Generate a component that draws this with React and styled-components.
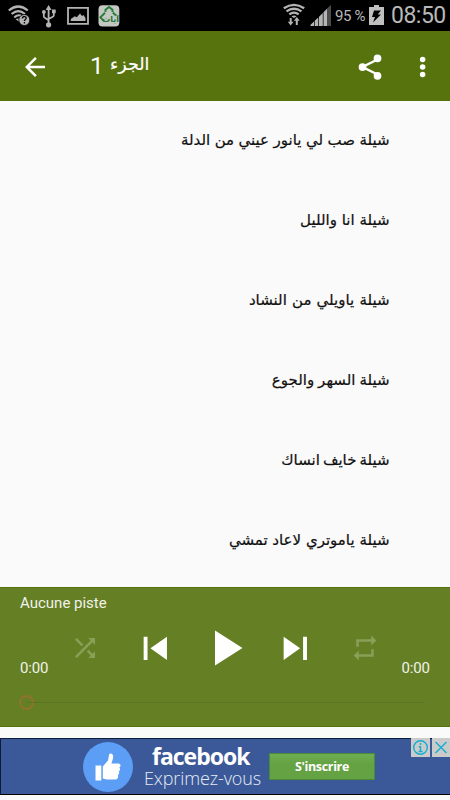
import React from 'react';
import styled, { createGlobalStyle } from 'styled-components';

const GlobalStyle = createGlobalStyle`
  * {
    box-sizing: border-box;
  }
  body {
    margin: 0;
    background: #fafafa;
    font-family: Roboto, 'Liberation Sans', sans-serif;
  }
`;

const Screen = styled.div`
  display: flex;
  flex-direction: column;
  width: 450px;
  height: 800px;
  overflow: hidden;
  background: #fafafa;
`;

const StatusBar = styled.div`
  display: flex;
  align-items: center;
  justify-content: space-between;
  height: 31px;
  padding: 0 4px 0 8px;
  background: #000;
`;

const StatusGroup = styled.div`
  display: flex;
  align-items: center;
  height: 31px;
`;

const StatusIcon = styled.svg`
  display: block;
  flex: none;
  margin-right: ${({ $gap }) => $gap || 0}px;
`;

const Battery = styled.span`
  width: 34px;
  font-size: 15px;
  line-height: 31px;
  letter-spacing: -0.4px;
  white-space: nowrap;
  color: #b8b8b8;
  padding-top: 2px;
`;

const Clock = styled.span`
  width: 55px;
  font-size: 23px;
  line-height: 31px;
  letter-spacing: -0.5px;
  white-space: nowrap;
  color: #b8b8b8;
`;

const Toolbar = styled.header`
  display: flex;
  flex: none;
  align-items: center;
  height: 70px;
  padding: 1px 12px 0 20px;
  background: #56730d;
  color: #fff;
`;

const Title = styled.h1`
  display: flex;
  flex: 1;
  height: 30px;
  align-items: center;
  margin: 0 0 0 40px;
  font-weight: 400;
`;

const TitleNumber = styled.span`
  width: 20px;
  font-size: 24.5px;
  line-height: 30px;
  margin-top: -2px;
`;

const TitleText = styled.span`
  font-family: 'DejaVu Sans', sans-serif;
  font-size: 17.5px;
  line-height: 30px;
  margin-top: -5px;
  white-space: nowrap;
  -webkit-text-stroke: 0.2px #fff;
`;

const Icon = styled.svg`
  display: block;
  flex: none;
  width: ${({ $size }) => $size || 30}px;
  height: ${({ $size }) => $size || 30}px;
  fill: ${({ $faded }) => ($faded ? '#8a9f58' : '#fff')};
  margin-right: ${({ $gap }) => $gap || 0}px;
`;

const TrackList = styled.ul`
  flex: none;
  height: 486px;
  margin: 0;
  padding: 0;
  overflow: hidden;
  list-style: none;
`;

const Track = styled.li`
  height: 80px;
  padding: 0 60.5px;
  font-family: 'DejaVu Sans', sans-serif;
  font-size: 15px;
  line-height: 79px;
  word-spacing: ${({ $spacing }) => $spacing}px;
  white-space: nowrap;
  color: #111;
  -webkit-text-stroke: 0.2px #111;
`;

const Player = styled.section`
  display: flex;
  flex-direction: column;
  flex: none;
  height: 140px;
  background: #657f25;
  border-top: 1px solid #567309;
  border-bottom: 1px solid #567309;
  color: #f0f2e9;
`;

const TrackName = styled.div`
  height: 30px;
  padding: 0 20px;
  font-size: 15px;
  line-height: 31px;
`;

const Controls = styled.div`
  display: flex;
  align-items: center;
  height: 60px;
`;

const Time = styled.span`
  width: 50px;
  font-size: 15px;
  line-height: 20px;
  margin-top: 40px;
  padding-left: ${({ $end }) => ($end ? 1.5 : 20)}px;
  letter-spacing: -0.2px;
`;

const ControlButton = styled.button`
  display: flex;
  align-items: center;
  justify-content: center;
  width: 70px;
  height: 60px;
  padding: 0;
  border: 0;
  background: none;
`;

const SeekBar = styled.div`
  display: flex;
  align-items: center;
  height: 15px;
  margin: 17px 26px 0 19px;
`;

const SeekThumb = styled.div`
  width: 15px;
  height: 15px;
  border: 2px solid #91732b;
  border-radius: 50%;
`;

const SeekTrack = styled.div`
  flex: 1;
  height: 1px;
  margin-left: -7px;
  background: #5b7426;
`;

const Banner = styled.aside`
  position: relative;
  display: flex;
  flex: none;
  align-items: center;
  height: 57px;
  margin-top: 11px;
  padding-left: 82px;
  background: #3b5998;
  border-top: 1px solid #0c1d3f;
  border-bottom: 1px solid #000;
  border-left: 1px solid #101c36;
  color: #fff;
`;

const LikeBadge = styled.div`
  display: flex;
  align-items: center;
  justify-content: center;
  width: 50px;
  height: 50px;
  border-radius: 50%;
  background: #5c9df5;
`;

const BannerText = styled.div`
  width: 125px;
  margin-left: 11px;
  font-family: 'Open Sans', 'Noto Sans', sans-serif;
  white-space: nowrap;
`;

const Brand = styled.div`
  padding-left: 8px;
  font-size: 23px;
  font-weight: 700;
  letter-spacing: -1px;
  line-height: 23px;
`;

const Slogan = styled.div`
  font-size: 18px;
  font-weight: 300;
  letter-spacing: -0.1px;
  line-height: 21px;
  color: #e6ebf5;
`;

const SignUp = styled.button`
  width: 106px;
  height: 27px;
  padding: 0;
  border: 1px solid #4b8a38;
  background: linear-gradient(#6fae50, #64a244 40%);
  color: #fff;
  font-family: 'Open Sans', 'Noto Sans', sans-serif;
  font-size: 12.5px;
  font-weight: 700;
  letter-spacing: -0.35px;
`;

const AdChoices = styled.div`
  position: absolute;
  top: -1px;
  right: 0;
  display: flex;
  gap: 2px;
`;

const AdButton = styled.svg`
  display: block;
  width: ${({ $width }) => $width}px;
  height: 19px;
  background: #cbcbcb;
  fill: none;
  stroke: #13aed0;
  stroke-width: 1.4;
`;

const tracks = [
  { title: 'شيلة صب لي يانور عيني من الدلة', spacing: -0.3 },
  { title: 'شيلة انا والليل', spacing: 0 },
  { title: 'شيلة ياويلي من النشاد', spacing: 0.4 },
  { title: 'شيلة السهر والجوع', spacing: -0.8 },
  { title: 'شيلة خايف انساك', spacing: -1.8 },
  { title: 'شيلة ياموتري لاعاد تمشي', spacing: 0 },
];

const controls = [
  {
    name: 'shuffle',
    size: 30,
    faded: true,
    path: 'M10.59 9.17L5.41 4 4 5.41l5.17 5.17 1.42-1.41zM14.5 4l2.04 2.04L4 18.59 5.41 20 17.96 7.46 20 9.5V4h-5.5zm.33 9.41l-1.41 1.41 3.13 3.13L14.5 20H20v-5.5l-2.04 2.04-3.13-3.13z',
  },
  { name: 'previous', size: 46.6, path: 'M6 6h2v12H6zm3.5 6l8.5 6V6z' },
  { name: 'play', size: 60, path: 'M8 5v14l11-7z' },
  { name: 'next', size: 46.6, path: 'M6 18l8.5-6L6 6v12zM16 6v12h2V6h-2z' },
  {
    name: 'repeat',
    size: 30,
    faded: true,
    path: 'M7 7h10v3l4-4-4-4v3H5v6h2V7zm10 10H7v-3l-4 4 4 4v-3h12v-6h-2v4z',
  },
];

const WifiQuestion = () => (
  <StatusIcon width="22" height="31" viewBox="0 0 22 31" $gap={12}>
    <g fill="none" stroke="#b4b4b4" strokeWidth="2.2">
      <path d="M0.8 10.5Q10.3 2.5 19.8 10.5" />
      <path d="M3.6 14Q10.3 8.2 17 14" />
      <path d="M6.3 17.3Q10.3 14 13.5 16" />
    </g>
    <path d="M7.6 19.3Q9.5 18 11.5 18.7L11.5 22Z" fill="#b4b4b4" />
    <circle cx="16.3" cy="20" r="5.5" fill="#b4b4b4" stroke="#000" strokeWidth="0.8" />
    <path d="M14.4 18.5c0-2.8 4-2.4 3.8-.2-.1 1.2-1.8 1.2-1.8 2.7M16.4 22v1.4" fill="none" stroke="#000" strokeWidth="1.3" />
  </StatusIcon>
);

const Usb = () => (
  <StatusIcon width="14" height="31" viewBox="0 0 14 31" $gap={11}>
    <g fill="none" stroke="#b4b4b4" strokeWidth="1.8">
      <path d="M6.6 8V25M1.8 12v4.2q0 1 1 1.6l3.8 2.5M11.8 11v4.2q0 1-1 1.5L6.6 19" />
    </g>
    <path d="M6.6 5l3 5h-6z" fill="#b4b4b4" />
    <circle cx="6.6" cy="24.8" r="2.6" fill="#b4b4b4" />
    <circle cx="1.9" cy="12" r="1.9" fill="#b4b4b4" />
    <path d="M10 9.5h3.7v3.7H10z" fill="#b4b4b4" />
  </StatusIcon>
);

const Picture = () => (
  <StatusIcon width="22" height="31" viewBox="0 0 22 31" $gap={9}>
    <path d="M1 7.8h20v16H1z" fill="none" stroke="#b4b4b4" strokeWidth="1.8" />
    <path d="M3.8 21v-2l4-2.8 2 1L13 13.5l2 2.5 1.5-1 2 3v3z" fill="#b4b4b4" />
  </StatusIcon>
);

const AppBadge = () => (
  <StatusIcon width="22" height="31" viewBox="0 0 22 31">
    <rect x="0.5" y="5.2" width="20.8" height="21.2" rx="4" fill="#c3c8c2" />
    <path d="M7.5 12V9.8L11 7 14.5 9.8V12M7 12.8L2.4 17.3 6 21.2M14.8 12.5L18 15.5" fill="none" stroke="#267c38" strokeWidth="1.9" />
    <text x="12.6" y="21.5" textAnchor="middle" fontFamily="DejaVu Sans" fontSize="8" fontWeight="700" fill="#247435">آيات</text>
  </StatusIcon>
);

const WifiData = () => (
  <StatusIcon width="22" height="31" viewBox="0 0 22 31" $gap={5}>
    <g fill="none" stroke="#b4b4b4" strokeWidth="2.3">
      <path d="M0.8 8.2Q11 1.5 21.2 8.2" />
      <path d="M3.5 11.4Q11 6 18.5 11.4" />
      <path d="M6.3 14.4Q11 10.8 15.7 14.4" />
    </g>
    <path d="M8.5 16.4Q11 14.5 13.5 16.4L11 18z" fill="#b4b4b4" />
    <path d="M7.7 18v5M13.8 25v-5" stroke="#b4b4b4" strokeWidth="2" />
    <path d="M4.8 21.8h5.8l-2.9 3.8zM10.9 20.8h5.8l-2.9-3.8z" fill="#b4b4b4" />
  </StatusIcon>
);

const Signal = () => (
  <StatusIcon width="22" height="31" viewBox="0 0 22 31" $gap={3}>
    <path d="M0.5 26v-1.2L4 21.5V26z M4.7 26v-5.2l3.6-3.4V26z M9 26v-9.3l3.8-3.7V26z M13.5 26V12.3l3.5-3.5V26z" fill="#b4b4b4" />
    <path d="M17 26V8.5l4-3.5v21z" fill="#4c4c4c" />
  </StatusIcon>
);

const Charging = () => (
  <StatusIcon width="15" height="31" viewBox="0 0 15 31" $gap={7}>
    <path d="M5 5h5v2h5v18H0V7h5z" fill="#c0c0c0" />
    <path d="M5 10.5h7L8.7 14.5H12L4 22.5l2-5.5H3z" fill="#000" />
  </StatusIcon>
);

const App = () => (
  <>
    <GlobalStyle />
    <Screen>
      <StatusBar>
        <StatusGroup>
          <WifiQuestion />
          <Usb />
          <Picture />
          <AppBadge />
        </StatusGroup>
        <StatusGroup>
          <WifiData />
          <Signal />
          <Battery>95 %</Battery>
          <Charging />
          <Clock>08:50</Clock>
        </StatusGroup>
      </StatusBar>

      <Toolbar>
        <Icon viewBox="0 0 24 24">
          <path d="M20 11H7.83l5.59-5.59L12 4l-8 8 8 8 1.41-1.41L7.83 13H20v-2z" />
        </Icon>
        <Title>
          <TitleNumber>1</TitleNumber>
          <TitleText dir="rtl">الجزء</TitleText>
        </Title>
        <Icon viewBox="0 0 24 24" $gap={23}>
          <path d="M18 6L6 12l12 6" fill="none" stroke="#fff" strokeWidth="2" />
          <circle cx="18" cy="5" r="3.1" />
          <circle cx="6" cy="12" r="3.1" />
          <circle cx="18" cy="19" r="3.1" />
        </Icon>
        <Icon viewBox="0 0 24 24">
          <circle cx="11.7" cy="6" r="2.2" />
          <circle cx="11.7" cy="12" r="2.2" />
          <circle cx="11.7" cy="18" r="2.2" />
        </Icon>
      </Toolbar>

      <TrackList>
        {tracks.map(({ title, spacing }) => (
          <Track key={title} dir="rtl" $spacing={spacing}>{title}</Track>
        ))}
      </TrackList>

      <Player>
        <TrackName>Aucune piste</TrackName>
        <Controls>
          <Time>0:00</Time>
          {controls.map(({ name, size, faded, path }) => (
            <ControlButton key={name} aria-label={name}>
              <Icon viewBox="0 0 24 24" $size={size} $faded={faded}>
                <path d={path} />
              </Icon>
            </ControlButton>
          ))}
          <Time $end>0:00</Time>
        </Controls>
        <SeekBar>
          <SeekThumb />
          <SeekTrack />
        </SeekBar>
      </Player>

      <Banner>
        <LikeBadge>
          <svg width="26" height="30" viewBox="0 0 26 30" fill="#fff">
            <rect x="0.5" y="13.5" width="5.8" height="15" />
            <path d="M7.8 14.5L13 8.5l1-5.5c.5-2.5 4.2-1.8 4.2 1.5 0 3-1.5 5-1.7 7h6.8c2.6 0 3 3 1 4 1.3 1.2.8 3.2-.6 3.8 1 1.3.4 3-.8 3.5.7 1.6 0 4.7-2.6 4.7H12c-2 0-2.4-1-4.2-1z" />
          </svg>
        </LikeBadge>
        <BannerText>
          <Brand>facebook</Brand>
          <Slogan>Exprimez-vous</Slogan>
        </BannerText>
        <SignUp>S'inscrire</SignUp>
        <AdChoices>
          <AdButton $width={19} viewBox="0 0 19 19">
            <circle cx="9.5" cy="9.5" r="6.8" />
            <path d="M9.5 5v2M7.8 8.8h1.7v4.7M7.5 13.5h4" />
          </AdButton>
          <AdButton $width={18} viewBox="0 0 18 19">
            <path d="M3.5 4l11 11M14.5 4l-11 11" />
          </AdButton>
        </AdChoices>
      </Banner>
    </Screen>
  </>
);

export default App;
